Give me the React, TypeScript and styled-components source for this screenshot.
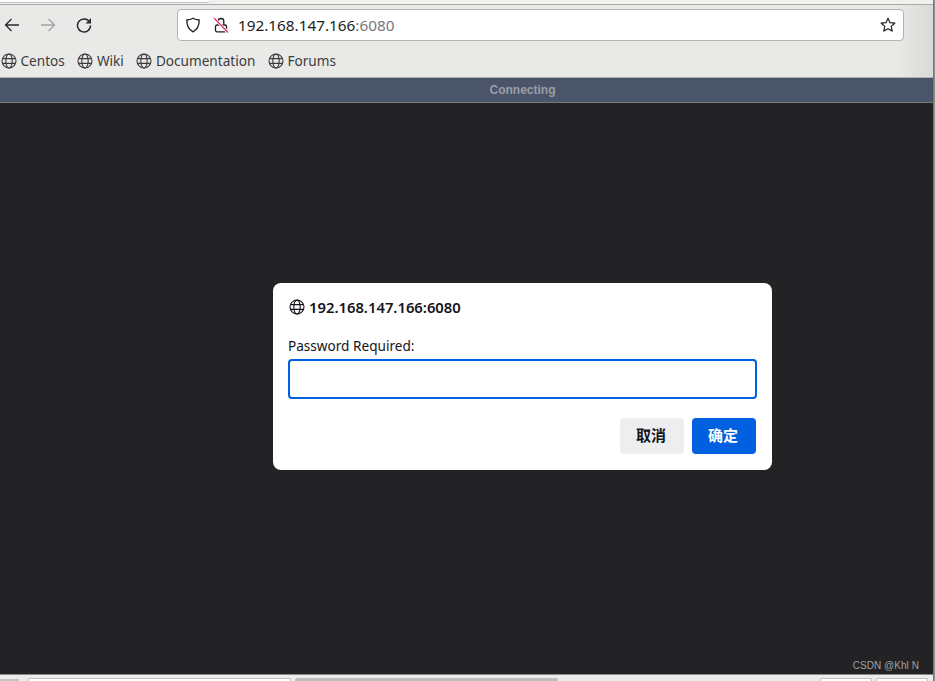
import styled, { createGlobalStyle } from 'styled-components';

const GlobalStyle = createGlobalStyle`
  html, body {
    margin: 0;
    padding: 0;
    width: 100%;
    height: 100%;
    overflow: hidden;
  }
  #root {
    height: 100%;
  }
`;

const UI_FONT = `"Noto Sans", "Noto Sans CJK SC", sans-serif`;

const Page = styled.div`
  position: relative;
  width: 935px;
  height: 681px;
  display: flex;
  flex-direction: column;
  overflow: hidden;
  font-family: ${UI_FONT};
  background: #e9e9e7;
`;

const TabStrip = styled.div`
  height: 4px;
  flex: none;
  background: #f0f0ee;
  border-bottom: 1px solid #a9a9a7;
  display: flex;
`;

const TabEdge = styled.div`
  width: 210px;
  height: 2px;
  background: #fafafa;
  border-bottom: 1px solid #c4c4c2;
  border-bottom-right-radius: 3px;
`;

const Toolbar = styled.div`
  height: 40px;
  flex: none;
  display: flex;
  align-items: center;
  padding-left: 4px;
  padding-right: 31px;
`;

const NavButton = styled.svg<{ $faded?: boolean }>`
  width: 16px;
  height: 16px;
  flex: none;
  margin-right: 20px;
  color: ${({ $faded }) => ($faded ? '#a3a3a3' : '#2a2a2c')};
`;

const UrlBar = styled.div`
  margin-left: 65px;
  flex: 1;
  height: 32px;
  box-sizing: border-box;
  background: #fff;
  border: 1px solid #b3b3b1;
  border-radius: 4px;
  display: flex;
  align-items: center;
  padding: 0 7px;
`;

const UrlIcon = styled.svg<{ $gap?: number }>`
  width: 16px;
  height: 16px;
  flex: none;
  margin-right: ${({ $gap }) => $gap ?? 0}px;
`;

const UrlHost = styled.span`
  font-size: 15.3px;
  color: #1c1c1e;
`;

const UrlPort = styled.span`
  font-size: 15.3px;
  color: #77777a;
`;

const Spacer = styled.div`
  flex: 1;
`;

const BookmarkBar = styled.div`
  height: 33px;
  flex: none;
  box-sizing: border-box;
  display: flex;
  align-items: center;
  gap: 12.6px;
  padding: 0 0 1px 1px;
  border-bottom: 1px solid #b0b0ae;
`;

const Bookmark = styled.div`
  display: flex;
  align-items: center;
  gap: 3.5px;
  font-size: 13.6px;
  color: #3c3c3e;
`;

const StatusBar = styled.div`
  height: 25px;
  flex: none;
  box-sizing: border-box;
  background: #4a5569;
  border-bottom: 1px solid #77777a;
  padding-left: 110px;
  display: flex;
  align-items: center;
  justify-content: center;
  font-family: "Liberation Sans", Arial, sans-serif;
  font-weight: 700;
  font-size: 12px;
  color: #9a9ea6;
`;

const Screen = styled.div`
  flex: 1;
  background: #232325;
  display: flex;
  align-items: flex-end;
  justify-content: flex-end;
  padding: 0 16px 1px 0;
`;

const Watermark = styled.div`
  font-family: "Liberation Sans", Arial, sans-serif;
  font-size: 10px;
  line-height: 14px;
  letter-spacing: 0.05px;
  color: #a0a0a0;
`;

const Taskbar = styled.div`
  height: 7px;
  flex: none;
  box-sizing: border-box;
  background: #ececec;
  border-top: 1px solid #8c8c8c;
  display: flex;
  align-items: flex-end;
  gap: 4px;
  padding-right: 7px;
`;

const TaskButton = styled.div<{ $width: number; $active?: boolean }>`
  width: ${({ $width }) => $width}px;
  height: 3px;
  box-sizing: border-box;
  background: ${({ $active }) => ($active ? '#bdbdbd' : '#ffffff')};
  border: 1px solid #bdbdbd;
  border-bottom: none;
  border-radius: 2px 2px 0 0;
`;

const TaskStub = styled.div`
  width: 19px;
  height: 2px;
  margin-right: 5px;
  background: #c4c4c4;
`;

const ChromeShade = styled.div`
  position: absolute;
  top: 5px;
  right: 0;
  width: 40px;
  height: 72px;
  background: linear-gradient(to right, rgba(0, 0, 0, 0), rgba(0, 0, 0, 0.07));
  pointer-events: none;
`;

const WindowEdge = styled.div`
  position: absolute;
  top: 0;
  right: 0;
  bottom: 0;
  width: 2px;
  background: linear-gradient(to right, #777777 50%, #8f8f8f 50%);
  pointer-events: none;
`;

const Dialog = styled.div`
  position: absolute;
  left: 273px;
  top: 283px;
  width: 499px;
  height: 187px;
  box-sizing: border-box;
  background: #fff;
  border-radius: 8px;
  padding: 14px 15px 16px 15px;
  display: flex;
  flex-direction: column;
`;

const DialogTitle = styled.div`
  display: flex;
  align-items: center;
  gap: 4px;
  height: 20px;
  padding-left: 1px;
  font-size: 14.8px;
  font-weight: 600;
  color: #15141a;
`;

const FieldLabel = styled.label`
  margin-top: 19px;
  height: 20px;
  line-height: 20px;
  font-size: 13.6px;
  color: #15141a;
`;

const PasswordInput = styled.div`
  margin-top: 3px;
  height: 40px;
  box-sizing: border-box;
  border: 2px solid #0060df;
  border-radius: 4px;
  background: #fff;
`;

const DialogActions = styled.div`
  margin-top: auto;
  margin-right: 1px;
  display: flex;
  justify-content: flex-end;
  gap: 8px;
`;

const DialogButton = styled.div<{ $primary?: boolean }>`
  width: 64px;
  height: 36px;
  padding: 0 2px 4px 0;
  box-sizing: border-box;
  border-radius: 4px;
  display: flex;
  align-items: center;
  justify-content: center;
  font-family: "Noto Sans CJK SC", sans-serif;
  font-size: 15px;
  font-weight: 700;
  background: ${({ $primary }) => ($primary ? '#0060df' : '#eeeef0')};
  color: ${({ $primary }) => ($primary ? '#fff' : '#15141a')};
`;

const GlobeIcon = ({ color }: { color: string }) => (
  <svg width="16" height="16" viewBox="0 0 16 16" fill="none" stroke={color} strokeWidth="1.1">
    <circle cx="8" cy="8" r="7" />
    <ellipse cx="8" cy="8" rx="3.2" ry="7" />
    <path d="M1.4 5.6h13.2M1.4 10.4h13.2" />
  </svg>
);

const BOOKMARKS = ['Centos', 'Wiki', 'Documentation', 'Forums'];

const App = () => {
  const renderBookmark = (title: string) => (
    <Bookmark key={title}>
      <GlobeIcon color="#3c3c3e" />
      {title}
    </Bookmark>
  );

  return (
    <Page>
      <GlobalStyle />
      <TabStrip>
        <TabEdge />
      </TabStrip>
      <Toolbar>
        <NavButton viewBox="0 0 16 16" fill="none" stroke="currentColor" strokeWidth="1.3">
          <path d="M15 8H1.500M7.500 2 1.500 8l6 6" />
        </NavButton>
        <NavButton $faded viewBox="0 0 16 16" fill="none" stroke="currentColor" strokeWidth="1.3">
          <path d="M1 8h13.500M8.500 2l6 6-6 6" />
        </NavButton>
        <NavButton viewBox="0 0 16 16" fill="none" stroke="currentColor" strokeWidth="1.5">
          <path d="M13.600 5.200A6.500 6.500 0 1 0 14.500 8.500" />
          <path d="M15 1v5.500H9.500z" fill="currentColor" stroke="none" />
        </NavButton>
        <UrlBar>
          <UrlIcon $gap={12} viewBox="0 0 16 16" fill="none" stroke="#1c1c1e" strokeWidth="1.3">
            <path d="M8 1.200c2 1.200 4 1.700 6.200 1.800 0 5-1.400 9.400-6.200 11.800C3.200 12.400 1.800 8 1.800 3 4 2.900 6 2.400 8 1.200z" />
          </UrlIcon>
          <UrlIcon $gap={9} viewBox="0 0 16 16" fill="none" stroke="#1c1c1e" strokeWidth="1.3">
            <path d="M5.200 7.500V4.300a2.800 2.800 0 0 1 5.600 0v3.200" />
            <rect x="2.500" y="8" width="11" height="6.800" rx="1.500" />
            <path d="M1 1 15 15.500" stroke="#ffffff" strokeWidth="3" />
            <path d="M1 1 15 15.500" stroke="#ee2a5c" strokeWidth="1.200" />
          </UrlIcon>
          <UrlHost>192.168.147.166</UrlHost>
          <UrlPort>:6080</UrlPort>
          <Spacer />
          <UrlIcon viewBox="0 0 16 16" fill="none" stroke="#1c1c1e" strokeWidth="1.2">
            <path d="M8 1.300 10 5.700l4.800.5-3.600 3.200 1 4.700L8 11.700l-4.200 2.400 1-4.700L1.200 6.200 6 5.700z" strokeLinejoin="round" />
          </UrlIcon>
        </UrlBar>
      </Toolbar>
      <BookmarkBar>{BOOKMARKS.map(renderBookmark)}</BookmarkBar>
      <StatusBar>Connecting</StatusBar>
      <Screen>
        <Watermark>CSDN @Khl N</Watermark>
      </Screen>
      <Taskbar>
        <TaskStub />
        <TaskButton $width={263} />
        <TaskButton $width={263} $active />
        <Spacer />
        <TaskButton $width={52} />
        <TaskButton $width={52} />
      </Taskbar>
      <ChromeShade />
      <WindowEdge />
      <Dialog>
        <DialogTitle>
          <GlobeIcon color="#15141a" />
          192.168.147.166:6080
        </DialogTitle>
        <FieldLabel>Password Required:</FieldLabel>
        <PasswordInput />
        <DialogActions>
          <DialogButton>取消</DialogButton>
          <DialogButton $primary>确定</DialogButton>
        </DialogActions>
      </Dialog>
    </Page>
  );
};

export default App;
